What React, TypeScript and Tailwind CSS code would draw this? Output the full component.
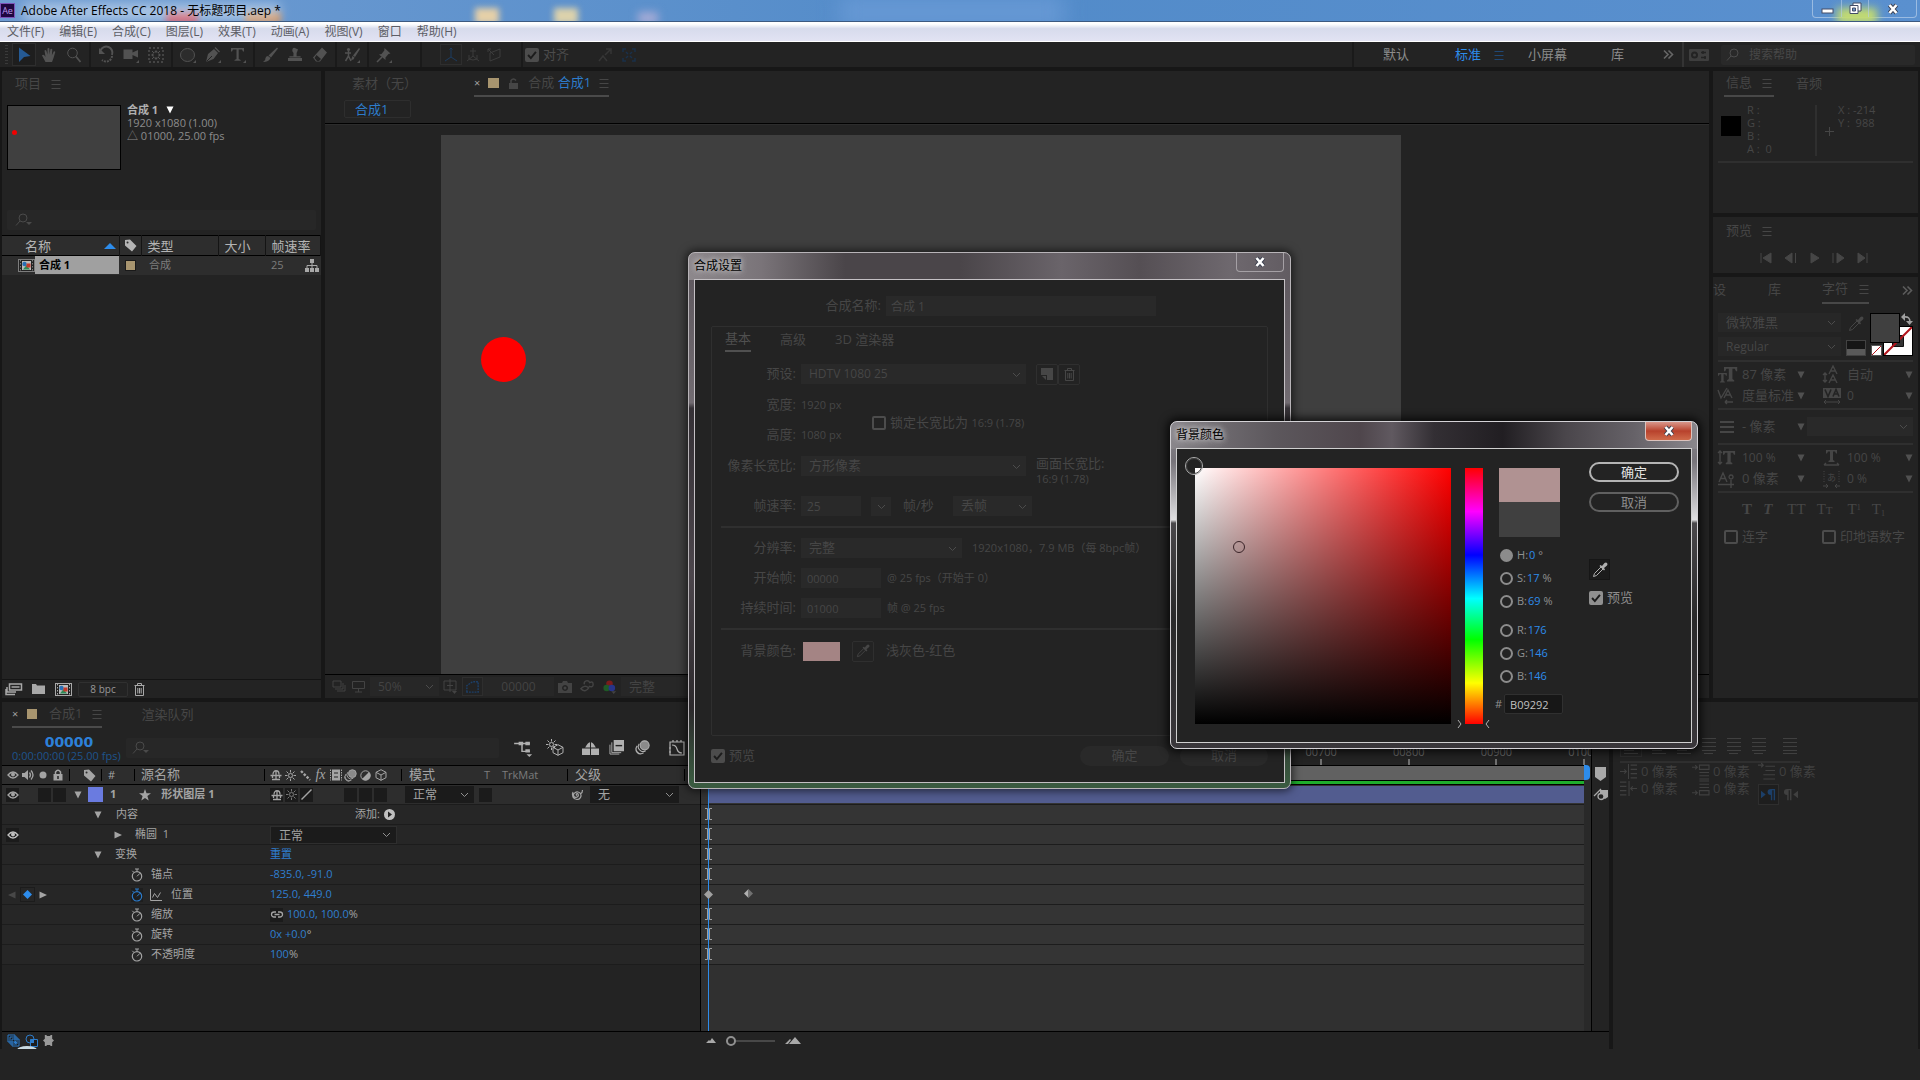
import React from "react";

type Kids = { children?: React.ReactNode };

function Ico({ w = 16, h, vb, className = "", children }: Kids & { w?: number; h?: number; vb?: string; className?: string }) {
  return (
    <svg width={w} height={h ?? w} viewBox={vb ?? "0 0 16 16"} fill="none" stroke="currentColor" strokeWidth="1" className={"shrink-0 overflow-visible " + className} aria-hidden="true">
      {children}
    </svg>
  );
}

const F = { fill: "currentColor", stroke: "none" } as const;

const Chevron = ({ className = "" }: { className?: string }) => (
  <Ico w={9} vb="0 0 9 9" className={className}><path d="M1 3l3.500 3.500L8 3" /></Ico>
);
const Burger = ({ className = "" }: { className?: string }) => (
  <Ico w={10} vb="0 0 10 10" className={className}><path d="M0.500 1.500h9M0.500 5.500h9M0.500 9.500h9" /></Ico>
);
const TriDown = ({ className = "" }: { className?: string }) => (
  <Ico w={8} vb="0 0 8 8" className={className}><path {...F} d="M0.500 0.500h7L4 7.500z" /></Ico>
);
const TriRight = ({ className = "" }: { className?: string }) => (
  <Ico w={8} vb="0 0 8 8" className={className}><path {...F} d="M0.500 0.500v7L8 4z" /></Ico>
);
const Magnify = ({ className = "", arrow = false }: { className?: string; arrow?: boolean }) => (
  <Ico w={18} h={14} vb="0 0 18 14" className={className}>
    <circle cx="8" cy="5" r="4" /><path d="M5 8L1 12.500" />{arrow && <path {...F} d="M11 9h6l-3 3z" />}
  </Ico>
);
const Eye = ({ className = "" }: { className?: string }) => (
  <Ico w={12} h={10} vb="0 0 12 10" className={className}>
    <path d="M1 5Q6-1 11 5Q6 11 1 5z" strokeWidth="1.300" /><circle cx="6" cy="4.600" r="2" {...F} />
  </Ico>
);
const Shy = () => (
  <Ico w={12} vb="0 0 12 12"><path d="M3 5.500C3 0.500 9 0.500 9 5.500M0.500 6.500h11M6 2v9M2 10.500h8M2.500 7v2M9.500 7v2" strokeWidth="1.300" /></Ico>
);
const Sun = ({ className = "" }: { className?: string }) => (
  <Ico w={11} vb="0 0 11 11" className={className}>
    <circle cx="5.500" cy="5.500" r="2" /><path d="M5.500 0v2.500M5.500 8.500V11M0 5.500h2.500M8.500 5.500H11M1.500 1.500l2 2M7.500 7.500l2 2M9.500 1.500l-2 2M3.500 7.500l-2 2" />
  </Ico>
);
const MotionBlur = ({ w = 13 }: { w?: number }) => (
  <Ico w={w} vb="0 0 14 14"><circle cx="9" cy="5" r="4.200" fill="#8a8a8a" /><path d="M4 3.500a4.500 4.500 0 0 0 6 6.500M2 5.500a4.500 4.500 0 0 0 6 6.500M0.800 8a4.500 4.500 0 0 0 5 5" /></Ico>
);
const Cube = ({ w = 12 }: { w?: number }) => (
  <Ico w={w} vb="0 0 12 12"><path d="M6 0.700L11 3.300V8.700L6 11.300L1 8.700V3.300zM1 3.300l5 2.700 5-2.700M6 6v5.300" /></Ico>
);
const Tag = () => (
  <Ico w={13} vb="0 0 13 13"><path {...F} fillRule="evenodd" d="M1 1l5-0.500L12.500 7 8 12.500 1 6.500zM3.500 2.500a1 1 0 1 0 .1 2 1 1 0 0 0-.1-2z" /></Ico>
);
const CompIcon = () => (
  <Ico w={17} h={13} vb="0 0 17 13">
    <rect x="0.500" y="0.500" width="16" height="12" fill="#222" /><path d="M2.500 1v11M14.500 1v11" strokeDasharray="1.500 1.500" />
    <rect x="4" y="2" width="9" height="9" fill="#bbb" stroke="none" />
    <path d="M5 10.500l3.500-4.500 3.500 4.500z" fill="#2e8b57" stroke="none" />
    <circle cx="6.500" cy="5" r="2.200" fill="#2a6fb5" stroke="none" /><rect x="8.500" y="4.500" width="4" height="4" fill="#c3392b" stroke="none" />
  </Ico>
);
const Trash = ({ className = "" }: { className?: string }) => (
  <Ico w={11} h={13} vb="0 0 11 13" className={className}><path d="M0.500 2.500h10M3.500 2V0.500h4V2M1.500 3v9.500h8V3M3.800 5v5.500M5.500 5v5.500M7.200 5v5.500" /></Ico>
);
const Dropper = ({ className = "", w = 16 }: { className?: string; w?: number }) => (
  <Ico w={w} className={className}><path d="M9 5L2.500 11.500 1.500 14.500 4.500 13.500 11 7z" /><path {...F} d="M7.500 4l1-1 1.500 1 2.500-3q1.500-1 2.500 0t0 2.500L12 6l1 1.500-1 1z" /></Ico>
);
const Watch = () => (
  <Ico w={12} h={14} vb="0 0 12 14"><circle cx="6" cy="8.300" r="4.700" strokeWidth="1.200" /><path d="M4 1h4M6 1v2.500M1.300 2.800l1.500 1.500M6 8.300l3-3" /></Ico>
);

function Drop({ label, value, id, className = "", chev = "text-[#4c4c4c]" }: { label: string; value: string; id?: string; className?: string; chev?: string }) {
  return (
    <span className={"relative flex items-center shrink-0 " + className}>
      <select id={id} aria-label={label} defaultValue={value} className="w-full h-full appearance-none bg-transparent pl-2 pr-4 outline-none">
        <option>{value}</option>
      </select>
      <Chevron className={"absolute right-[5px] pointer-events-none " + chev} />
    </span>
  );
}

const Tick = ({ id, label, checked, tone, text }: { id: string; label: React.ReactNode; checked?: boolean; tone: "lit" | "dim"; text: string }) => (
  <span className="flex items-center gap-1">
    <span className="relative flex">
      <input
        id={id}
        type="checkbox"
        defaultChecked={checked}
        className={
          "appearance-none size-[14px] rounded-xs border-2 " +
          (tone === "lit" ? "border-[#909090] checked:bg-[#909090]" : "border-[#4c4c4c] checked:bg-[#4c4c4c]")
        }
      />
      {checked && <Ico w={14} className="absolute inset-0 text-[#1c1c1c] pointer-events-none"><path d="M3.500 8l3.200 3.500L12.500 4.500" strokeWidth="2.200" /></Ico>}
    </span>
    <label htmlFor={id} className={text}>{label}</label>
  </span>
);

/* ---------- top ---------- */

function TitleBar() {
  return (
    <header className="relative h-[22px] shrink-0 flex items-center justify-between border-b border-[#3d5a80] overflow-hidden bg-linear-to-r from-[#6f9cd2] via-[#528bc9] to-[#5a90cf]">
      <i className="absolute left-[166px] top-3 w-8 h-3 bg-[#c04a60] blur-[3px]" />
      <i className="absolute left-[245px] top-3 w-9 h-3 bg-[#c08a60] blur-[3px]" />
      <i className="absolute left-[475px] top-2 w-6 h-4 bg-[#e6d0a8] blur-[3px]" />
      <i className="absolute left-[554px] top-2 w-6 h-4 bg-[#ddd2ac] blur-[3px]" />
      <i className="absolute left-[638px] top-3 w-5 h-3 bg-[#a5abd6] blur-[4px]" />
      <i className="absolute left-[840px] -top-1 w-56 h-8 bg-[#6698d4] blur-[10px]" />
      <i className="absolute left-6 top-1 w-64 h-4 bg-white/45 blur-[6px]" />
      <div className="relative flex items-center gap-[6px] h-full">
        <span className="w-[15px] h-[15px] bg-[#1f0740] border border-[#7d53b8] text-[#b99ae8] text-[9px] leading-[13px] text-center">Ae</span>
        <h1 className="text-black text-[12px]">Adobe After Effects CC 2018 - 无标题项目.aep *</h1>
      </div>
      <div className="relative flex self-start h-[18px] mr-[3px] border border-t-0 border-[#b5cdea]/70 rounded-b text-white">
        <i className="absolute left-6 top-2 w-10 h-4 bg-[#c4dc70] blur-[4px]" />
        <button aria-label="最小化" className="relative w-[29px] flex items-center justify-center border-r border-[#b5cdea]/60">
          <Ico w={13} h={6} vb="0 0 13 6" className="mt-1"><rect x="1" y="1" width="11" height="4" fill="#fff" stroke="#444c66" /></Ico>
        </button>
        <button aria-label="还原" className="relative w-[27px] flex items-center justify-center border-r border-[#b5cdea]/60">
          <Ico w={13} vb="0 0 13 13"><path d="M4 1h8v8H4z" fill="#fff" stroke="#444c66" /><path d="M1 3.500h8v8H1z" fill="#fff" stroke="#444c66" /><path d="M3.500 6h3v3h-3z" fill="#6c96c8" stroke="#444c66" /></Ico>
        </button>
        <button aria-label="关闭" className="relative w-[47px] flex items-center justify-center"><CloseX /></button>
      </div>
    </header>
  );
}

const CloseX = () => (
  <Ico w={12} vb="0 0 12 12">
    <path d="M2.500 2l7 8M9.500 2l-7 8" stroke="#3c4050" strokeWidth="4.200" /><path d="M2.500 2l7 8M9.500 2l-7 8" stroke="#fff" strokeWidth="2.600" />
  </Ico>
);

const menus = ["文件(F)", "编辑(E)", "合成(C)", "图层(L)", "效果(T)", "动画(A)", "视图(V)", "窗口", "帮助(H)"];

function MenuBar() {
  return (
    <nav className="h-[20px] shrink-0 flex items-center gap-[15px] pl-[7px] border-b border-white bg-linear-to-b from-white from-10% via-[#d7dbec] via-35% to-[#e2e3f3] text-[#5d5e66] text-[12px]">
      {menus.map((m) => <button key={m}>{m}</button>)}
    </nav>
  );
}

const Sep = () => <i className="w-[7px] shrink-0 h-full flex justify-center"><b className="w-[2px] h-full bg-[#1a1a1a]" /></i>;
const Corner = () => <path {...F} d="M16 13v3h-3z" />;

const tools: ({ n: string; el: React.ReactNode } | null)[] = [
  { n: "手形工具", el: <path {...F} d="M4.500 15L1 8.500q1-1.500 2.500 0L4.500 10 3.500 3.500q1-1.200 1.800 0L6.500 7.500V1.500q1-1.200 1.900 0v6l1-5.200q1.200-1 1.900.3l-.4 5.600 1.800-3.700q1.300-.6 1.600.6L12.500 11l-1.500 4z" /> },
  { n: "缩放工具", el: <><circle cx="6.500" cy="6" r="4.800" /><path d="M10 9.500l4.500 5.500" strokeWidth="1.800" /></> },
  null,
  { n: "旋转工具", el: <><path d="M2.500 3.500A6 6 0 0 1 14 8" strokeWidth="2" /><path d="M14 9A6 6 0 0 1 4 13" strokeWidth="2" strokeDasharray="2 1" /><path {...F} d="M1 1v6h6z" /></> },
  { n: "摄像机工具", el: <><path {...F} d="M0.500 2.500h9v3L15 3v7.500L9.500 8v4h-9z" /><Corner /></> },
  { n: "向后平移", el: <><path d="M1 1h14v14H1z" strokeDasharray="2 2" strokeWidth="1.400" /><path {...F} d="M8 3l2 2.500H6zM8 13l2-2.500H6zM3 8l2.500-2v4zM13 8l-2.500-2v4z" /><path d="M4 4l2 2M12 4l-2 2M4 12l2-2M12 12l-2-2" /></> },
  null,
  { n: "椭圆工具", el: <><ellipse cx="7.500" cy="8" rx="7" ry="6.500" fill="#2c2c2c" /><Corner /></> },
  { n: "钢笔工具", el: <><path {...F} d="M1 15L3 7l6-5 4 4-4.500 6zM9.500 1l1-1L15 4.500l-1 1z" /><path d="M1.500 14.500L7 9" stroke="#232323" /><Corner /></> },
  { n: "文字工具", el: <><path {...F} d="M1 1h13v3.500h-1L12 2.500H8.700V12l2 1v.8H4.500V13l2-1V2.500H3L2 4.500H1z" /><Corner /></> },
  null,
  { n: "画笔工具", el: <path {...F} d="M15 0.500l1 1L9 10.500 6.500 8.500zM6 9l2.500 2Q7 15 1 15q3-2 2.500-4Q4 9 6 9z" /> },
  { n: "仿制图章", el: <path {...F} d="M1 11h14v3H1zM6.500 6Q4.500 4 5.500 2t2.500-1 2.500 1 -.9 4v3.200h4V10.500H2.400V9.200h4z" /> },
  { n: "橡皮擦", el: <path {...F} d="M10 0.500l5 5-7 9H4l-3-4zM2.500 11l2.500 3h2l2-2-4.500-4z" fillRule="evenodd" /> },
  null,
  { n: "Roto 笔刷", el: <><circle cx="4.500" cy="2.500" r="1.600" {...F} /><path d="M4.500 4v5l-3 5M4.500 9l2.500 5M1 6h6" strokeWidth="1.500" /><path {...F} d="M15 1l1 1-5 8-2-1.500zM8.500 9l2 1.500Q10 13 7 13z" /><Corner /></> },
  null,
  { n: "操控点", el: <><path {...F} d="M8.500 1l6 5.500-2 .5-3 3.500v2.500L3 7.500l2.500-.5L8.300 3.500z" /><path d="M6 10l-5 5" strokeWidth="1.600" /><Corner /></> },
];

function Toolbar() {
  return (
    <div role="toolbar" className="h-[25px] shrink-0 flex items-center bg-[#232323] text-[#525252] text-[13px]">
      <i className="w-[3px] h-[19px] ml-[5px] mr-1 bg-[repeating-linear-gradient(#3a3a3a_0_1px,transparent_1px_3px)]" />
      <button aria-label="选取工具" className="w-[24px] h-[23px] flex items-center justify-center border border-[#2e2e2e] bg-[#1e1e1e] text-[#255a94]">
        <Ico w={16}><path {...F} d="M3 0.500L14.500 9 8 10l-5 5z" /></Ico>
      </button>
      {tools.map((t, i) =>
        t ? <button key={i} aria-label={t.n} className="w-[25px] flex justify-center shrink-0"><Ico w={16}>{t.el}</Ico></button> : <Sep key={i} />
      )}
      <i className="w-[21px]" /><Sep />
      <div className="flex items-center ml-4 mr-3">
        <button aria-label="本地轴" className="w-[22px] h-[21px] flex items-center justify-center border border-[#2e2e2e] text-[#1d3c60]"><Ico><path d="M8 1v9M8 10l-6 4M8 10l6 4M6.500 2.500L8 1l1.500 1.500" /></Ico></button>
        <button aria-label="世界轴" className="w-[22px] flex justify-center text-[#3c3c3c]"><Ico><path d="M8 1v8M8 9l-6 5M8 9l6 5M5 4h6M4 8v4l4 1 4-1V8" /></Ico></button>
        <button aria-label="视图轴" className="w-[22px] flex justify-center text-[#3c3c3c]"><Ico><path d="M3 6l10-4v8L3 14zM1 2l6 6M1 2h3M1 2v3" /></Ico></button>
      </div>
      <Sep />
      <Tick id="snap" checked tone="dim" label="对齐" text="text-[#4c4c4c]" />
      <span className="flex gap-2 ml-7">
        <Ico className="text-[#363636]"><path d="M2 14l4-5 4 5M8 8l5-5M9 2h5v5" strokeWidth="1.500" /></Ico>
        <Ico className="text-[#1a304a]"><path d="M2 5V2h3M11 2h3v3M14 11v3h-3M5 14H2v-3M5 5l2 2M11 5L9 7M5 11l2-2M11 11L9 9" strokeWidth="1.500" /></Ico>
      </span>
      <div className="ml-auto flex items-center h-full">
        <Sep />
        <nav className="flex items-center ml-[27px] pr-2 w-[299px] text-[#8c8c8c]">
          <button className="w-[72px] text-left">默认</button>
          <button className="text-[#2d8ceb]">标准</button>
          <Burger className="ml-[13px] text-[#1f4775]" />
          <button className="ml-6">小屏幕</button>
          <button className="ml-11">库</button>
          <button aria-label="更多工作区" className="ml-auto text-[#666]"><Ico w={11} vb="0 0 11 9"><path d="M1 0.500l4 4-4 4M5.500 0.500l4 4-4 4" strokeWidth="1.600" /></Ico></button>
        </nav>
        <i className="w-[2px] h-full bg-[#343434]" />
        <Ico w={20} h={12} vb="0 0 20 12" className="ml-[5px] mr-3 text-[#3e3e3e]"><rect width="20" height="12" rx="1" {...F} /><circle cx="5.500" cy="6" r="2.500" stroke="#232323" strokeWidth="2" /><path d="M12 3.500h5M12 8.500h5M14 2v3M16 7v3" stroke="#232323" strokeWidth="1.500" /></Ico>
        <div className="flex items-center w-[194px] h-[20px] mr-[5px] px-[5px] bg-[#292929] rounded-xs">
          <Magnify className="text-[#4c4c4c]" />
          <input aria-label="搜索帮助" placeholder="搜索帮助" className="w-full pl-[5px] bg-transparent text-[12px] outline-none placeholder:text-[#474747]" />
        </div>
      </div>
    </div>
  );
}

/* ---------- project ---------- */

function Project() {
  return (
    <section className="w-[319px] shrink-0 flex flex-col bg-[#232323]">
      <h2 className="flex items-center gap-[10px] h-[25px] pl-[13px] text-[13px] text-[#464646]">项目 <Burger /></h2>
      <div className="flex mt-[9px] ml-[5px] gap-[6px]">
        <div className="relative w-[114px] h-[65px] bg-[#404040] border border-black"><i className="absolute left-1 top-6 size-[5px] rounded-full bg-[#f00000]" /></div>
        <div className="text-[11px] leading-[13px] text-[#8c8c8c] -mt-[2px]">
          <button className="flex items-center gap-2 text-[#b0b0b0] font-bold">合成 1 <TriDown className="text-white" /></button>
          <p>1920 x1080 (1.00)</p>
          <p>△ 01000, 25.00 fps</p>
        </div>
      </div>
      <div className="flex items-center h-[20px] mx-[5px] mt-[40px] mb-[5px] px-2 bg-[#272727] text-[#4a4a4a] rounded-xs">
        <Magnify arrow /><input aria-label="搜索项目" className="w-full bg-transparent outline-none" />
      </div>
      <table className="w-full table-fixed text-[13px] text-[#b4b4b4] border-collapse">
        <colgroup><col className="w-[117px]" /><col className="w-[22px]" /><col className="w-[77px]" /><col className="w-[47px]" /><col /></colgroup>
        <thead className="bg-[#2d2d2d] border-y border-black">
          <tr className="h-[20px] text-left [&>th]:font-normal [&>th]:border-r [&>th]:border-[#141414] [&>th]:leading-[18px] [&>th]:p-0">
            <th><span className="flex items-center justify-between pl-[23px] pr-[3px]">名称 <Ico w={12} h={6} vb="0 0 12 6" className="text-[#2d8ceb]"><path {...F} d="M0 6l6-6 6 6z" /></Ico></span></th>
            <th><span className="flex justify-center"><Tag /></span></th>
            <th><span className="pl-[6px]">类型</span></th>
            <th><span className="pl-[6px]">大小</span></th>
            <th><span className="pl-[6px]">帧速率</span></th>
          </tr>
        </thead>
        <tbody>
          <tr className="h-[19px] bg-[#2d2d2d] text-[11px] text-[#7c7c7c] [&>td]:p-0">
            <td><span className="flex items-center h-[18px] pl-4"><CompIcon /><span className="grow h-full pl-1 bg-[#a0a0a0] text-black font-bold leading-[18px]">合成 1</span></span></td>
            <td><i className="block size-[11px] mx-auto bg-[#a8956f] border border-[#1a1a1a]" /></td>
            <td><span className="pl-[8px]">合成</span></td>
            <td />
            <td><span className="flex items-center justify-between pl-[6px] pr-[2px]">25 <span className="text-[#a8a8a8]"><Ico w={14} h={13} vb="0 0 14 13"><path {...F} d="M5 0h4v4H5zM0 9h4v4H0zM5 9h4v4H5zM10 9h4v4h-4z" /><path d="M7 4v5M2 9V6.500h10V9" /></Ico></span></span></td>
          </tr>
        </tbody>
      </table>
      <div className="mt-auto flex items-center h-[19px] gap-[6px] pl-[3px] border-t border-[#141414] text-[#a8a8a8]">
        <button aria-label="解释素材"><Ico w={17} h={12} vb="0 0 17 12"><path d="M4.500 1h12v6h-12zM6.500 4h8M2 4v5h9M1 6v5.500h9" strokeWidth="1.500" /></Ico></button>
        <button aria-label="新建文件夹" className="mx-1"><Ico w={13} h={10} vb="0 0 13 10"><path {...F} d="M0 0h4l1 1.500h8V10H0z" /></Ico></button>
        <button aria-label="新建合成"><CompIcon /></button>
        <button className="w-[50px] h-[15px] border border-[#303030] rounded-xs text-[10px] leading-[13px] text-[#989898]">8 bpc</button>
        <button aria-label="删除"><Trash /></button>
      </div>
    </section>
  );
}

/* ---------- composition viewer ---------- */

function Viewer() {
  return (
    <section className="grow min-w-0 flex flex-col bg-[#232323] text-[13px] text-[#464646]">
      <div className="flex h-[28px] pl-[27px]">
        <h2 className="w-[122px] leading-[25px]">素材（无）</h2>
        <h2 className="flex items-center gap-2 h-[26px] border-b-2 border-[#4a4a4a] text-[13px]">
          <button aria-label="关闭合成" className="text-[#a0a0a0] text-[11px]">×</button>
          <i className="w-[11px] h-[10px] bg-[#a8956f]" />
          <Ico w={9} h={11} vb="0 0 9 11" className="mx-[2px]"><path {...F} d="M0 5h9v6H0z" /><path d="M2 5V2.500Q4.500-.5 7 2.500" strokeWidth="1.500" /></Ico>
          <span>合成 <span className="text-[#2d7ccb]">合成1</span></span>
          <Burger />
        </h2>
      </div>
      <div className="h-[25px] pl-[19px] border-b border-black pt-[1px]">
        <button className="w-[67px] h-[18px] pl-[10px] text-left leading-[16px] border border-[#2e2e2e] rounded-xs text-[#2d7ccb]">合成1</button>
      </div>
      <div className="grow pl-[116px] pt-[10px] border-t border-[#2c2c2c] flex">
        <div className="relative w-[960px] bg-[#3f3f3f]">
          <i className="absolute left-[40px] top-[202px] size-[45px] rounded-full bg-[#ff0000]" />
        </div>
      </div>
      <div className="flex items-center h-[24px] pl-[7px] border-t border-black text-[#434343]">
        <Ico w={13} vb="0 0 13 13"><path d="M1 1h8v6H1zM3 9h8V3M5 11h8V5" /></Ico>
        <Ico w={13} vb="0 0 13 13" className="ml-[7px] mr-[5px]"><path d="M0.500 1.500h12v7H0.500zM6.500 9v3M3 12h7" /></Ico>
        <Drop label="放大率" value="50%" className="w-[69px] h-[19px] bg-[#272727] text-[12px]" />
        <Ico w={15} vb="0 0 15 15" className="mx-1"><path d="M1 2h12v9H1zM7 0v13M4 6.500h6" /><path {...F} d="M9 12h5l-2.500 3z" /></Ico>
        <button aria-label="蒙版" className="w-[21px] h-[19px] flex items-center justify-center border border-[#2e2e2e] text-[#1c3f68]"><Ico w={15}><path d="M2 14V7L8 3h6v11z" strokeDasharray="2 1" strokeWidth="1.500" /></Ico></button>
        <button className="w-[71px] h-[19px] bg-[#272727] text-[12px]">00000</button>
        <Ico w={14} h={12} vb="0 0 14 12" className="mx-[4px]"><path {...F} fillRule="evenodd" d="M0 2h4l1-2h4l1 2h4v10H0zM7 4a3 3 0 1 0 .1 0z" /><circle cx="7" cy="7" r="1.500" {...F} /></Ico>
        <Ico w={14} className="mx-1"><path d="M1 10q4-5 9-1-4 6-9 1zM5 5a3 3 0 0 1 6-2q4-2 4 2t-5 2" strokeWidth="1.600" /></Ico>
        <Ico w={15} className="mx-1"><circle cx="8" cy="5" r="3.500" fill="#7a1c1c" stroke="none" /><circle cx="5" cy="9.500" r="3.500" fill="#1f5a26" stroke="none" /><circle cx="10.500" cy="9.500" r="3.500" fill="#27348a" stroke="none" /><path {...F} d="M10 13h5l-2.500 3z" /></Ico>
        <Drop label="分辨率" value="完整" className="w-[86px] h-[19px] bg-[#272727]" />
      </div>
    </section>
  );
}

/* ---------- right column ---------- */

const Hr = () => <hr className="border-0 h-[2px] bg-[#2f2f2f]" />;

function Metric({ icon, value, small }: { icon: React.ReactNode; value: string; small?: boolean }) {
  return (
    <span className="flex items-center w-full h-[21px]">
      <span className="w-[18px] mr-[6px] shrink-0">{icon}</span>
      <button className={"grow text-left whitespace-nowrap " + (small ? "text-[12px]" : "text-[13px]")}>{value}</button>
      <TriDown className="text-[#505050]" />
    </span>
  );
}

const G = ({ d, children }: { d?: string; children?: React.ReactNode }) => <Ico w={18} vb="0 0 18 18">{d && <path d={d} strokeWidth="1.400" />}{children}</Ico>;

/* Serif capital used by the type-size icons */
const SerifT = ({ x, y, s }: { x: number; y: number; s: number }) => (
  <path {...F} transform={"translate(" + x + " " + y + ") scale(" + s + ")"} d="M0 0h11v3.500h-1L9 1.500H7V10l1.500 1v1h-6v-1L4 10V1.500H2L1 3.500H0z" />
);

function RightColumn() {
  return (
    <aside className="w-[205px] shrink-0 flex flex-col gap-1 text-[13px] text-[#464646]">
      <section className="h-[142px] bg-[#232323]">
        <div className="flex pl-[11px] gap-[22px]">
          <h2 className="flex items-center gap-[10px] h-[26px] px-[2px] border-b-2 border-[#484848]">信息 <Burger /></h2>
          <h2 className="leading-[25px]">音频</h2>
        </div>
        <div className="flex mt-[6px] pl-2 text-[11px] leading-[13px] h-[58px]">
          <i className="w-5 h-5 bg-black mt-[13px]" />
          <dl className="w-[68px] ml-[6px] leading-[13px]"><div>R :</div><div>G :</div><div>B :</div><div>A :&nbsp; 0</div></dl>
          <i className="w-[2px] h-[51px] bg-[#2f2f2f] mt-[2px]" />
          <Ico w={9} vb="0 0 9 9" className="ml-2 mt-6"><path d="M4.500 0v9M0 4.500h9" /></Ico>
          <div className="ml-1"><p>X : -214</p><p>Y :&nbsp; 988</p></div>
        </div>
        <div className="px-[5px]"><Hr /></div>
      </section>
      <section className="h-[56px] bg-[#232323]">
        <h2 className="flex items-center gap-[10px] h-[27px] pl-[13px]">预览 <Burger /></h2>
        <div className="flex gap-[11px] pl-[47px] pt-2">
          {[
            ["第一帧", "M1 1v10M11 1v10L3 6z"], ["上一帧", "M8 1v10L1 6zM11.500 1v10"], ["播放", "M3 1l8 5-8 5z"], ["下一帧", "M1 1v10M5 1l7 5-7 5z"], ["最后一帧", "M2 1l7 5-7 5zM11 1v10"],
          ].map(([n, d]) => <button key={n} aria-label={n}><Ico w={13} h={12} vb="0 0 13 12"><path d={d} fill="currentColor" /></Ico></button>)}
        </div>
      </section>
      <section className="grow bg-[#232323] pr-[5px]">
        <div className="flex items-center h-[26px] mb-[10px]">
          <h2>设</h2><h2 className="ml-[42px]">库</h2>
          <h2 className="flex items-center gap-[11px] h-[27px] ml-[41px] border-b-2 border-[#484848]">字符 <Burger /></h2>
          <Ico w={11} vb="0 0 11 9" className="ml-auto text-[#5c5c5c]"><path d="M1 0.500l4 4-4 4M5.500 0.500l4 4-4 4" strokeWidth="1.600" /></Ico>
        </div>
        <div className="flex pl-[5px] mb-1">
          <div className="w-[123px] flex flex-col gap-[5px]">
            <Drop label="字体" value="微软雅黑" className="h-[19px] bg-[#272727]" />
            <Drop label="字体样式" value="Regular" className="h-[19px] bg-[#272727] text-[12px]" />
          </div>
          <div className="w-[29px] flex flex-col items-center gap-2 pt-[3px]">
            <Dropper />
            <span className="w-5 h-4 border border-[#424242] bg-[#161616] flex items-end"><i className="w-full h-[6px] bg-[#5a5a5a]" /></span>
          </div>
          <div className="relative w-[43px] h-[43px]">
            <span className="absolute right-0 bottom-0 size-[30px] bg-white border border-black overflow-hidden">
              <Ico w={28} vb="0 0 28 28"><path d="M8.500 8.500h11v11h-11z" fill="#333" stroke="#111" /><path d="M0 28L28 0" stroke="#b3141c" strokeWidth="2" /></Ico>
            </span>
            <button aria-label="填充颜色" className="absolute left-0 top-0 size-[30px] bg-[#404040] border border-black" />
            <Ico w={12} vb="0 0 12 12" className="absolute right-0 top-0 text-[#a0a0a0]"><path d="M3 4q6-1 6 5" strokeWidth="1.600" /><path {...F} d="M0 4l4-4v8zM5 8h7l-3.500 4z" /></Ico>
            <span className="absolute left-[1px] bottom-0 size-[11px] bg-white border border-[#555]"><Ico w={9} vb="0 0 9 9"><path d="M0 9L9 0" stroke="#b3141c" /></Ico></span>
          </div>
        </div>
        <div className="pl-[5px] flex flex-col gap-[2px]">
          <Hr />
          <div className="grid grid-cols-[87px_90px] gap-x-[18px]">
            <Metric icon={<G><SerifT x={0} y={7} s={0.8} /><SerifT x={6} y={1} s={1.2} /></G>} value="87 像素" />
            <Metric icon={<G d="M2 7v9M0 9l2-2 2 2M0 14l2 2 2-2M6 8l4-8 4 8M7.500 5h5M6 17l4-8 4 8M7.500 14h5" />} value="自动" />
            <Metric icon={<G d="M0 3l3 8 6-10M6 11l4-8 4 8M8 8h5M7 15h8M7 15l2-2M7 15l2 2" />} value="度量标准" />
            <Metric small icon={<G><rect y="1" width="18" height="10" {...F} /><path d="M2 2.500l3 7 3-7M10 9.500l3-7 3 7M11 7h4" stroke="#232323" strokeWidth="1.600" /><path d="M1 15h16M1 15l2-2M1 15l2 2M17 15l-2-2M17 15l-2 2" /></G>} value="0" />
          </div>
          <Hr />
          <div className="flex items-center py-1">
            <span className="w-[87px] mr-[2px] shrink-0"><Metric icon={<G><path d="M2 4h14M2 9h14M2 14h14" strokeWidth="2" /></G>} value="- 像素" /></span>
            <Drop label="描边方式" value="" className="grow h-[19px] bg-[#292929]" />
          </div>
          <Hr />
          <div className="grid grid-cols-[87px_90px] gap-x-[18px]">
            <Metric small icon={<G d="M2 2v13M0 4l2-2 2 2M0 13l2 2 2-2"><SerifT x={5} y={2} s={1.1} /></G>} value="100 %" />
            <Metric small icon={<G d="M1 16h15M1 16l2-2M16 16l-2-2"><SerifT x={3} y={1} s={1} /></G>} value="100 %" />
            <Metric icon={<G d="M1 12l4-9 4 9M2.500 8.500h5M0 14.500h16M13 5a2 2 0 1 0 .1 0M13 10v8" />} value="0 像素" />
            <Metric small icon={<G><path d="M1 1v12M16 1v12" strokeDasharray="1 1.500" /><path d="M0 16h5M3 14l2 2-2 2M17 16h-5M14 14l-2 2 2 2" /><text x="4" y="11" fontSize="9" fontFamily="Noto Sans CJK JP" {...F}>あ</text></G>} value="0 %" />
          </div>
          <Hr />
          <div className="flex items-center justify-center gap-[11px] h-7 pr-1 font-['Liberation_Serif'] font-bold text-[15px]">
            <button>T</button><button className="italic">T</button><button className="font-normal ml-1">TT</button><button className="font-normal">T<span className="text-[11px]">T</span></button><button className="font-normal ml-1">T<sup className="text-[8px]">1</sup></button><button className="font-normal">T<sub className="text-[8px]">1</sub></button>
          </div>
          <div className="flex items-center h-[24px] pl-[6px] gap-[54px] whitespace-nowrap">
            <Tick id="lig" tone="dim" label="连字" text="" />
            <Tick id="hindi" tone="dim" label="印地语数字" text="" />
          </div>
        </div>
      </section>
    </aside>
  );
}

/* ---------- timeline ---------- */

const VBar = () => <i className="w-[1px] h-[12px] bg-black shrink-0" />;
const Slot = ({ children }: Kids) => <span className="w-[13px] h-[14px] mr-[2px] flex items-center justify-center bg-[#1b1b1b] shrink-0">{children}</span>;

function Row({ a, b, c, tall }: { a?: React.ReactNode; b: React.ReactNode; c?: React.ReactNode; tall?: boolean }) {
  return (
    <div className={"flex items-center h-[20px] border-b border-[#1c1c1c] " + (tall ? "bg-[#2d2d2d]" : "bg-[#262626]")}>
      <span className="w-[67px] shrink-0 flex items-center">{a}</span>
      <span className="w-[201px] shrink-0 flex items-center">{b}</span>
      <span className="grow flex items-center">{c}</span>
    </div>
  );
}

const Hot = ({ children }: Kids) => <button className="text-[#2f7fd0] text-[11px]">{children}</button>;

const Prop = ({ name, value, unit, link }: { name: string; value: string; unit?: string; link?: boolean }) => (
  <Row
    b={<span className="flex items-center gap-[8px] pl-[62px]"><button aria-label={"关键帧 " + name}><Watch /></button>{name}</span>}
    c={<>{link && <span className="mr-[2px]"><Slot><Ico w={12} h={7} vb="0 0 12 7"><path d="M5 1H3a2.500 2.500 0 0 0 0 5h2M7 1h2a2.500 2.500 0 0 1 0 5H7M3.500 3.500h5" strokeWidth="1.300" /></Ico></Slot></span>}<Hot>{value}</Hot>{unit}</>}
  />
);

const switchIcons = [
  <Shy />, <Sun />,
  <Ico w={11} vb="0 0 11 11"><path d="M1 1l9 9" strokeWidth="2.400" strokeDasharray="2.500 1.500" /></Ico>,
  <i className="font-['Liberation_Serif'] text-[14px] leading-[14px]">fx</i>,
  <Ico w={12} vb="0 0 12 12"><path d="M0.500 0.500v11M11.500 0.500v11" strokeDasharray="1.500 1" /><rect x="2" y="0.500" width="8" height="11" {...F} /><path d="M4 4h4M4 8h4" stroke="#222" /></Ico>,
  <MotionBlur />,
  <Ico w={11} vb="0 0 11 11"><circle cx="5.500" cy="5.500" r="4.700" /><path {...F} d="M9 2a4.700 4.700 0 1 1-7 7z" /></Ico>,
  <Cube />,
];

function LayerPane() {
  return (
    <div className="w-[699px] shrink-0 flex flex-col border-r border-black text-[#a4a4a4]">
      <div className="flex items-center h-[35px] pl-[10px]">
        <div className="w-[114px] text-center">
          <button className="block mx-auto text-[#2d80d8] text-[14px] leading-[16px] font-bold font-['DejaVu_Sans']">00000</button>
          <span className="block text-left text-[11px] leading-[12px] text-[#1e538c] whitespace-nowrap">0:00:00:00 (25.00 fps)</span>
        </div>
        <div className="flex items-center w-[373px] h-[20px] px-[6px] bg-[#272727] text-[#4a4a4a] rounded-xs">
          <Magnify arrow /><input aria-label="搜索图层" className="w-full bg-transparent outline-none" />
        </div>
        <div className="flex items-center ml-[14px] text-[#b0b0b0]">
          <Ico w={18}><path d="M1 4h5M8 4h7M8 4v7h7" strokeWidth="1.300" /><path {...F} d="M5 2.500h4v3H5zM11 2.500h4v3h-4zM11 9h4v3h-4zM12 13.500h5l-2.500 2.500z" /></Ico>
          <span className="flex ml-[15px] mr-[18px]"><Sun /><span className="-ml-[5px] mt-[5px]"><Cube /></span></span>
          <Ico w={17}><path {...F} d="M0 9h16v6H0zM3 8q5-10 10 0z" /><path d="M8 2v13" stroke="#232323" /></Ico>
          <Ico w={15} className="ml-[10px]"><path {...F} d="M5 0h11v12H5z" /><path d="M3 2.500v11h10M1 5v10h10" /><path d="M7 6h7" stroke="#232323" strokeWidth="1.500" /></Ico>
          <span className="ml-[11px]"><MotionBlur w={15} /></span>
          <Ico w={16} className="ml-[19px]"><path d="M1 2h14v13H1zM3 5q4 0 5 4t5 4M4 0v2M8 0v2M12 0v2M0 8h2M0 12h2" strokeWidth="1.200" /></Ico>
        </div>
      </div>
      <div className="flex items-center h-[20px] bg-[#2d2d2d] border-y border-black text-[13px]">
        <span className="w-[67px] flex items-center gap-[3px] pl-[5px] shrink-0">
          <Eye />
          <Ico w={12} vb="0 0 12 12"><path {...F} d="M0 4h2.500L6 1v10L2.500 8H0z" /><path d="M7.500 3.500q2 2.500 0 5M9 1.500q4 4.500 0 9" strokeWidth="1.300" /></Ico>
          <Ico w={12} vb="0 0 12 12"><circle cx="6" cy="6" r="3.500" {...F} /></Ico>
          <Ico w={12} vb="0 0 12 12"><path {...F} d="M1.500 5h9v6.500h-9z" /><path d="M3.500 5V3q2.500-3.500 5 0v2" strokeWidth="1.500" /><path d="M6 7v3" stroke="#222" strokeWidth="1.500" /></Ico>
        </span>
        <VBar /><span className="w-[31px] flex justify-center pl-2"><Tag /></span>
        <VBar /><span className="w-[32px] pl-[6px] text-[11px]">#</span>
        <VBar /><span className="w-[129px] pl-[6px]">源名称</span>
        <VBar /><span className="w-[136px] flex items-center pl-[3px]">{switchIcons.map((s, i) => <span key={i} className="w-[15px] flex justify-center">{s}</span>)}</span>
        <VBar /><span className="w-[78px] pl-[7px]">模式</span><span className="w-[22px] pl-[4px] text-[11px] text-[#7c7c7c]">T</span><span className="w-[65px] text-[11px] text-[#7c7c7c]">TrkMat</span>
        <VBar /><span className="w-[116px] pl-[7px]">父级</span><VBar />
      </div>
      <div className="text-[11px]">
        <Row tall
          a={<><span className="ml-[4px] mr-[17px]"><Slot><Eye /></Slot></span><Slot /><Slot /></>}
          b={<><TriDown className="ml-[5px] mr-[6px]" /><i className="size-[15px] bg-[#6a7be0]" /><span className="ml-[7px] font-bold">1</span>
            <Ico w={12} vb="0 0 12 12" className="ml-[23px] mr-[10px]"><path {...F} d="M6 0l1.500 4.200 4.500.1-3.600 2.700L9.700 11.500 6 8.900l-3.700 2.600L3.600 7 0 4.300l4.500-.1z" /></Ico>
            <span className="font-bold">形状图层 1</span></>}
          c={<><Slot><Shy /></Slot><Slot><Sun className="text-[#777]" /></Slot><Slot><Ico w={11} vb="0 0 11 11"><path d="M0.500 10.500l10-10" strokeWidth="1.500" /></Ico></Slot>
            <span className="flex ml-[29px] mr-[16px]"><Slot /><Slot /><Slot /></span>
            <Drop label="混合模式" value="正常" className="w-[69px] h-[17px] bg-[#1b1b1b] text-[12px] mr-[5px]" chev="text-[#909090]" /><Slot />
            <Ico w={12} vb="0 0 12 12" className="ml-[77px] mr-[7px]"><path d="M6 6.500a1 1 0 1 1 1.200-1.200A2.400 2.400 0 1 1 4 3.700a4 4 0 0 1 5.600 1A4 4 0 0 1 6 10.500 5 5 0 0 1 2 3M9.600 4.700q2-1 1.900-3.700" strokeWidth="1.200" /></Ico>
            <Drop label="父级" value="无" className="w-[89px] h-[17px] bg-[#1b1b1b] text-[12px]" chev="text-[#909090]" /></>}
        />
        <Row b={<><TriDown className="ml-[25px] mr-[14px]" />内容</>} c={<span className="flex items-center gap-1 ml-[85px]">添加: <button aria-label="添加"><Ico w={11} vb="0 0 11 11" className="text-[#c0c0c0]"><circle cx="5.500" cy="5.500" r="5.500" {...F} /><path d="M4 2.500v6l4-3z" fill="#222" stroke="none" /></Ico></button></span>} />
        <Row a={<span className="ml-[4px]"><Slot><Eye className="text-[#c0c0c0]" /></Slot></span>} b={<><TriRight className="ml-[45px] mr-[13px]" />椭圆&nbsp; 1</>} c={<Drop label="椭圆混合模式" value="正常" className="w-[127px] h-[18px] bg-[#1b1b1b] border border-[#2e2e2e] text-[12px]" chev="text-[#909090]" />} />
        <Row b={<><TriDown className="ml-[25px] mr-[13px]" />变换</>} c={<Hot>重置</Hot>} />
        <Prop name="锚点" value="-835.0, -91.0" />
        <Row
          a={<span className="flex items-center ml-[6px] gap-1"><TriRight className="rotate-180 text-[#484848]" /><button aria-label="切换关键帧" className="size-[15px] flex items-center justify-center border border-[#1c1c1c]"><Ico w={9} vb="0 0 9 9" className="text-[#2d8ceb]"><path {...F} d="M4.500 0L9 4.500 4.500 9 0 4.500z" /></Ico></button><TriRight /></span>}
          b={<><button aria-label="关键帧 位置" className="ml-[62px] text-[#2d7ccb] bg-[#1e1e1e]"><Watch /></button><Ico w={12} vb="0 0 12 12" className="ml-[7px] mr-[9px]"><path d="M0.500 0v11.500H12M2.500 8.500l2-4 3 4 3-5" /></Ico>位置</>}
          c={<Hot>125.0, 449.0</Hot>}
        />
        <Prop name="缩放" value="100.0, 100.0" unit="%" link />
        <Prop name="旋转" value="0x +0.0" unit="°" />
        <Prop name="不透明度" value="100" unit="%" />
      </div>
    </div>
  );
}

const ticks = ["00000", "00100", "00200", "00300", "00400", "00500", "00600", "00700", "00800", "00900", "01000"];

function Tracks() {
  return (
    <div className="relative isolate grow min-w-0 flex">
      <div className="grow min-w-0 flex flex-col pl-[7px] bg-[#232323]">
        <div className="relative z-10 flex justify-between items-end h-[35px] text-[11px] text-[#707070]">
          {ticks.map((t) => <span key={t} className="w-0 flex flex-col items-center leading-[13px]">{t}<i className="w-[2px] h-[6px] bg-[#707070] mt-[1px]" /></span>)}
        </div>
        <div className="h-[15px] bg-[#616161] border-t border-black" />
        <div className="h-[5px] bg-[#1fae2c] border-y border-black" />
        <div className="h-[19px] -ml-[7px] pl-[7px] py-[1px] bg-[#343434]"><div className="h-full bg-[#525c8f]" /></div>
        <div className="-ml-[7px] h-[160px] bg-[repeating-linear-gradient(#1c1c1c_0_1px,#343434_1px_20px)]" />
        <div className="-ml-[7px] grow bg-[#303030] border-t border-[#1c1c1c]" />
      </div>
      <div className="w-[7px] bg-[#292929] pt-[35px]"><i className="block w-[6px] h-[15px] rounded-r bg-[#2d8ceb]" /></div>
      <div className="relative z-20 w-[18px] bg-[#232323] border-l border-black pt-[37px] flex flex-col items-center gap-[7px] text-[#a8a8a8]">
        <Ico w={11} h={14} vb="0 0 11 14"><path {...F} d="M0 0h11v10l-5.500 4L0 10z" /></Ico>
        <Ico w={14} h={12} vb="0 0 14 12"><path {...F} d="M6 2h8v7l-3 2-5-2z" /><circle cx="7" cy="8.500" r="3" fill="#232323" strokeWidth="1.300" /><path d="M0 8l7-7" strokeWidth="1.300" /></Ico>
      </div>
      <div className="absolute left-[2px] top-[54px] bottom-0 w-[11px] flex flex-col items-center text-[#a0a0a0]">
        <i className="absolute w-[1px] left-[5px] inset-y-0 bg-[#2d8ceb]" />
        {[0, 1, 2, 3, 4, 5, 6, 7].map((i) => (
          <span key={i} className={"relative h-[20px] flex items-center " + (i === 0 ? "mt-[20px]" : "")}>
            {i === 4
              ? <Ico w={9} vb="0 0 9 9"><path {...F} d="M4.500 0L9 4.500 4.500 9 0 4.500z" /></Ico>
              : <Ico w={7} h={12} vb="0 0 7 12"><path d="M0 0.500h2.500v11H0M7 0.500H4.500v11H7" /></Ico>}
          </span>
        ))}
      </div>
      <Ico w={9} vb="0 0 9 9" className="absolute left-[43px] top-[159px]"><path d="M4.500 0L0 4.500 4.500 9z" fill="#b0b0b0" stroke="none" /><path d="M4.500 0L9 4.500 4.500 9z" fill="#707070" stroke="none" /></Ico>
    </div>
  );
}

function Timeline() {
  return (
    <section className="grow min-w-0 flex flex-col bg-[#232323]">
      <div className="flex gap-[39px] h-[28px] pl-[10px] text-[13px] text-[#464646]">
        <h2 className="flex items-center h-[26px] border-b-2 border-[#4a4a4a]">
          <button aria-label="关闭合成1" className="text-[#a0a0a0] text-[11px] w-[15px] text-left">×</button>
          <i className="w-[10px] h-[10px] mr-3 bg-[#a8956f]" />合成1 <Burger className="ml-[10px]" />
        </h2>
        <h2 className="leading-[25px]">渲染队列</h2>
      </div>
      <div className="flex h-[301px]"><LayerPane /><Tracks /></div>
      <div className="relative flex items-center h-[18px] pl-[5px] border-t border-black overflow-hidden">
        <i className="absolute left-[15px] top-[14px] w-[20px] h-[8px] rounded-[50%] bg-[#c8d8e0]" />
        <span className="w-[699px] shrink-0 flex items-center gap-[5px] text-[#2d7ccb]">
          <Ico w={13} vb="0 0 13 13"><path d="M1 1h7v7H1zM3 3h7v7H3zM5 5h7v7H5zM8.500 7v3M7 8.500h3" fill="#1c1c1c" /></Ico>
          <Ico w={13} vb="0 0 13 13"><circle cx="5" cy="5" r="4" /><path d="M5.500 5.500h7v7h-7z" fill="#1c1c1c" /><path {...F} d="M5.500 5.500h3.500v3.500H5.500z" /></Ico>
          <Ico w={11} vb="0 0 12 12" className="text-[#999]"><path {...F} d="M2 0h2v1h4V0h2v4l2 2-2 2v4H8v-1H4v1H2V8L0 6l2-2z" /></Ico>
        </span>
        <label className="flex items-center gap-[10px] text-[#a8a8a8]">
          <Ico w={10} h={5} vb="0 0 10 5"><path {...F} d="M0 5l3-3 1 1 2-3 4 5z" /></Ico>
          <input type="range" aria-label="缩放时间轴" defaultValue="0" className="appearance-none w-[49px] h-[2px] bg-[#484848] [&::-webkit-slider-thumb]:appearance-none [&::-webkit-slider-thumb]:size-[10px] [&::-webkit-slider-thumb]:rounded-full [&::-webkit-slider-thumb]:border-2 [&::-webkit-slider-thumb]:border-[#909090] [&::-webkit-slider-thumb]:bg-[#232323]" />
          <Ico w={16} h={7} vb="0 0 16 7"><path {...F} d="M0 7l5-5 1 1-3 4zM4 7l6-7 6 7z" /></Ico>
        </label>
      </div>
    </section>
  );
}

const Indent = ({ d, v }: { d: string; v: string }) => (
  <span className="flex items-center gap-[4px] h-[17px] whitespace-nowrap"><Ico w={17}><path d={d} /></Ico><button>{v}</button></span>
);

function Paragraph() {
  return (
    <aside className="w-[305px] shrink-0 bg-[#232323] text-[#404040] text-[13px] pl-[7px] pt-[32px]">
      <div className="flex items-center gap-[9px] h-[23px] text-[#404040]">
        {["左对齐", "居中", "右对齐"].map((n) => (
          <button key={n} aria-label={n} className="first:border first:border-[#2e2e2e] first:w-[22px] flex justify-center h-[23px] items-center"><Ico w={16}><path d="M1 0.500h14M1 4.500h10M1 8.500h14M1 12.500h10M1 15.500h14" /></Ico></button>
        ))}
        {["末行左对齐", "末行居中", "末行右对齐"].map((n) => (
          <button key={n} aria-label={n}><Ico w={16}><path d="M1 0.500h14M1 4.500h14M1 8.500h14M1 12.500h14M3 15.500h9" /></Ico></button>
        ))}
        <button aria-label="两端对齐" className="ml-[6px]"><Ico w={16}><path d="M1 0.500h14M1 4.500h14M1 8.500h14M1 12.500h14M1 15.500h14" /></Ico></button>
      </div>
      <div className="w-[180px] mt-1"><Hr /></div>
      <div className="flex">
        <div className="flex flex-col w-[72px]"><Indent d="M0 8h6M4 6l2 2-2 2M8 1v14M10 2h6M10 6h6M10 10h6M10 14h6" v="0 像素" /><Indent d="M0 2h6M0 6h6M0 10h6M0 14h6M8.500 1v14M16 8h-6M12 6l-2 2 2 2" v="0 像素" /></div>
        <div className="flex flex-col w-[66px]"><Indent d="M0 4h5M3 2l2 2-2 2M7 2h9v4H7zM7 9h9M7 12h9M7 15h9" v="0 像素" /><Indent d="M0 12h5M3 10l2 2-2 2M7 10h9v4H7zM7 1h9M7 4h9M7 7h9" v="0 像素" /></div>
        <div className="flex flex-col gap-1">
          <Indent d="M0 2h5M3 0l2 2-2 2M7 3h9M7 7h9M5 11h11M5 15h11" v="0 像素" />
          <span className="flex gap-1 text-[#404040]">
            <button aria-label="从左到右" className="w-[21px] h-[21px] flex items-center justify-center border border-[#2e2e2e] bg-[#1e1e1e] text-[#1c3f68]"><Ico w={15}><path {...F} d="M0 4v8l5-4zM15 2v12h-1.500V3.500h-1.500V14h-1.500V8.500q-3.500 0-3.500-3.200T10.500 2z" /></Ico></button>
            <button aria-label="从右到左"><Ico w={15}><path {...F} d="M16 4v8l-5-4zM9 2v12H7.500V3.500H6V14H4.500V8.500Q1 8.500 1 5.300T4.500 2z" /></Ico></button>
          </span>
        </div>
      </div>
    </aside>
  );
}

/* ---------- dialogs ---------- */

const boxBg = "bg-[#292929]";

function FormRow({ label, htmlFor, children }: Kids & { label: string; htmlFor?: string }) {
  return (
    <div className="flex items-center h-[20px]">
      <label htmlFor={htmlFor} className="w-[84px] shrink-0 text-right mr-[5px] whitespace-nowrap">{label}:</label>
      {children}
    </div>
  );
}

function CompSettings() {
  return (
    <div role="dialog" aria-label="合成设置" className="absolute left-[688px] top-[252px] w-[603px] rounded-[7px] border border-[#b8b4b8] p-[5px] pt-0 shadow-[0_0_8px_2px_rgba(0,0,0,0.6)] bg-no-repeat bg-[length:100%_27px,100%_100%] bg-[linear-gradient(90deg,#8d888c,#7a7479_12%,#4a4549_26%,#4a4549_45%,#6a646a_62%,#554f54_75%,#6e686e_90%,#625c62),linear-gradient(#5c565c,#716b71_28%,#353136_29%,#4c464c_60%,#2c292c_85%,#3a5a40_99%)]">
      <div className="flex items-center justify-between h-[26px] -mr-1">
        <h2 className="text-[12px] text-black [text-shadow:0_0_6px_#ccc,0_0_6px_#ccc]">合成设置</h2>
        <button aria-label="关闭合成设置" className="self-start w-[48px] h-[19px] flex items-center justify-center border border-t-0 border-[#a5a0a5] rounded-b mr-[5px]"><CloseX /></button>
      </div>
      <div className="border border-[#c4c0c4] bg-[#232323] text-[13px] text-[#464646] px-4 h-[504px] pt-4">
        <div className="flex items-center h-[20px] gap-[5px] pl-[110px]">
          <label htmlFor="cname" className="w-[60px] text-right whitespace-nowrap">合成名称:</label>
          <input id="cname" defaultValue="合成 1" className={"w-[270px] h-[20px] px-[5px] outline-none text-[12px] " + boxBg} />
        </div>
        <div className="mt-[10px] h-[410px] rounded-xs border border-[#2f2f2f] pt-[1px]">
          <div role="tablist" className="flex gap-[29px] pl-[13px] mb-[12px]">
            <button role="tab" aria-selected="true" className="h-[24px] border-b-2 border-[#505050] text-[#505050]">基本</button>
            <button role="tab" className="h-[24px]">高级</button>
            <button role="tab" className="h-[24px]">3D 渲染器</button>
          </div>
          <FormRow label="预设" htmlFor="preset">
            <Drop id="preset" label="预设" value="HDTV 1080 25" className={"w-[225px] h-[20px] text-[12px] mr-[10px] " + boxBg} />
            <button aria-label="新建预设" className="w-[22px] h-[21px] flex items-center justify-center border border-[#2f2f2f] rounded-xs"><Ico w={12} vb="0 0 12 12"><path {...F} d="M0 0h12v12H6V7H0zM1 8h4v4z" /></Ico></button>
            <button aria-label="删除预设" className="w-[22px] h-[21px] flex items-center justify-center border border-[#2f2f2f] rounded-xs"><Trash /></button>
          </FormRow>
          <div className="relative flex flex-col gap-[10px] mt-[11px] mb-[11px]">
            <FormRow label="宽度"><button className="text-[11px]">1920 px</button></FormRow>
            <FormRow label="高度"><button className="text-[11px]">1080 px</button></FormRow>
            <span className="absolute left-[160px] top-[18px]"><Tick id="lock" tone="dim" label={<>锁定长宽比为 <span className="text-[11px]">16:9 (1.78)</span></>} text="" /></span>
          </div>
          <FormRow label="像素长宽比" htmlFor="par">
            <Drop id="par" label="像素长宽比" value="方形像素" className={"w-[225px] h-[20px] mr-[10px] " + boxBg} />
            <span className="text-[13px] leading-[15px] self-start whitespace-nowrap">画面长宽比:<br /><span className="text-[11px]">16:9 (1.78)</span></span>
          </FormRow>
          <div className="mt-5 mb-[10px]">
            <FormRow label="帧速率" htmlFor="fps">
              <input id="fps" defaultValue="25" className={"w-[60px] h-[20px] px-[6px] outline-none text-[12px] " + boxBg} />
              <Drop label="帧速率预设" value="" className={"w-[20px] h-[19px] ml-[10px] mr-3 " + boxBg} />
              <span className="w-[50px]">帧/秒</span>
              <Drop label="丢帧" value="丢帧" className={"w-[79px] h-[20px] " + boxBg} />
            </FormRow>
          </div>
          <div className="mx-[9px]"><Hr /></div>
          <div className="flex flex-col gap-[10px] my-[10px]">
            <FormRow label="分辨率" htmlFor="res"><Drop id="res" label="分辨率" value="完整" className={"w-[161px] h-[20px] mr-[10px] " + boxBg} /><span className="text-[11px]">1920x1080，7.9 MB（每 8bpc帧）</span></FormRow>
            <FormRow label="开始帧" htmlFor="start"><input id="start" defaultValue="00000" className={"w-[80px] h-[20px] px-[6px] mr-[6px] outline-none text-[11px] " + boxBg} /><span className="text-[11px]">@ 25 fps（开始于 0）</span></FormRow>
            <FormRow label="持续时间" htmlFor="dur"><input id="dur" defaultValue="01000" className={"w-[80px] h-[20px] px-[6px] mr-[6px] outline-none text-[11px] " + boxBg} /><span className="text-[11px]">帧 @ 25 fps</span></FormRow>
          </div>
          <div className="mx-[9px] mb-[11px]"><Hr /></div>
          <FormRow label="背景颜色">
            <button aria-label="背景颜色" className="w-[37px] h-[19px] ml-[2px] mr-3 bg-[#a48484]" />
            <button aria-label="吸管" className="w-[22px] h-[21px] flex items-center justify-center border border-[#2f2f2f] mr-3 rounded-xs"><Dropper w={14} /></button>
            浅灰色-红色
          </FormRow>
        </div>
        <div className="flex items-center mt-[10px] gap-[11px]">
          <Tick id="cprev" checked tone="dim" label="预览" text="" />
          <button className={"ml-auto w-[89px] h-[20px] rounded-full " + boxBg}>确定</button>
          <button className={"w-[88px] h-[20px] rounded-full " + boxBg}>取消</button>
        </div>
      </div>
    </div>
  );
}

const channels = [
  { k: "H", v: "0", u: "°", on: true, gap: "" },
  { k: "S", v: "17", u: "%", on: false, gap: "" },
  { k: "B", v: "69", u: "%", on: false, gap: "" },
  { k: "R", v: "176", u: "", on: false, gap: "mt-[6px]" },
  { k: "G", v: "146", u: "", on: false, gap: "" },
  { k: "B", v: "146", u: "", on: false, gap: "" },
];

function ColorDialog() {
  return (
    <div role="dialog" aria-label="背景颜色" className="absolute left-[1170px] top-[421px] w-[528px] rounded-[7px] border border-[#d4d2d6] p-[5px] pt-0 shadow-[0_0_8px_3px_rgba(0,0,0,0.75)] bg-no-repeat bg-[length:100%_27px,100%_100%] bg-[linear-gradient(90deg,#8a878c,#6d696e_10%,#5c575c_20%,#4f464c_36%,#605960_42%,#332f34_50%,#211e22_63%,#4a464b_75%,#666268_88%,#8a878c),linear-gradient(#86838a,#77747a_12%,#e0e0e2_30%,#4a484b_31%,#2a2a2b_60%,#3a373b)]">
      <div className="flex items-center justify-between h-[26px]">
        <h2 className="text-[12px] text-black [text-shadow:0_0_6px_#ddd,0_0_6px_#ddd]">背景颜色</h2>
        <button aria-label="关闭背景颜色" className="self-start w-[47px] h-[19px] flex items-center justify-center border border-t-0 border-[#dcc2bc] rounded-b bg-linear-to-b from-[#d8968a] via-[#b8412c] via-50% to-[#cf6a4a]"><CloseX /></button>
      </div>
      <div className="flex items-start border border-[#d0d0d0] bg-[#232323] h-[295px] pt-[19px] pl-[18px] pr-3 text-[11px] text-[#909090]">
        <div className="relative w-[256px] h-[256px] bg-[linear-gradient(to_top,#000,transparent),linear-gradient(to_right,#fff,#f00)]">
          <i className="absolute -left-[10px] -top-[11px] size-[18px] rounded-full border border-[#b0b0b0] outline outline-[#444] -outline-offset-2" />
          <i className="absolute left-[38px] top-[73px] size-[12px] rounded-full border border-[#3a2428]" />
        </div>
        <div className="relative ml-[14px] w-[18px] h-[256px] bg-[linear-gradient(#f00,#f0f_17%,#00f_34%,#0ff_51%,#0f0_67%,#ff0_84%,#f00)]">
          <Ico w={5} h={8} vb="0 0 5 8" className="absolute -left-[8px] -bottom-1 text-[#b0b0b0]"><path d="M1 0l3 4-3 4" /></Ico>
          <Ico w={5} h={8} vb="0 0 5 8" className="absolute -right-[7px] -bottom-1 text-[#b0b0b0]"><path d="M4 0L1 4l3 4" /></Ico>
        </div>
        <div className="ml-[16px] w-[61px] shrink-0">
          <div className="h-[34px] bg-[#b09292]" />
          <div className="h-[35px] bg-[#404040] mb-[7px]" />
          {channels.map((c, i) => (
            <div key={i} className={"flex items-center h-[23px] whitespace-nowrap " + c.gap}>
              <input id={"ch" + i} type="radio" name="channel" defaultChecked={c.on} className="appearance-none shrink-0 size-[13px] ml-[1px] mr-[4px] rounded-full border-2 border-[#8c8c8c] checked:bg-[#8c8c8c]" />
              <label htmlFor={"ch" + i}>{c.k}:</label>
              <button className="text-[#2d8ceb] text-[11px] ml-[1px] mr-[3px]">{c.v}</button>{c.u}
            </div>
          ))}
          <div className="flex items-center mt-[6px] -ml-[4px]">
            <label htmlFor="hex" className="mr-[2px]">#</label>
            <input id="hex" defaultValue="B09292" className="w-[59px] h-[20px] shrink-0 px-[5px] bg-[#171717] border border-[#303030] rounded-xs text-[#c0c0c0] text-[11px] outline-none" />
          </div>
        </div>
        <div className="ml-auto -mt-[6px] w-[90px] text-[13px] flex flex-col items-start">
          <button className="w-full h-[20px] rounded-full border-2 border-[#b4b4b4] text-[#e4e4e4] leading-[14px]">确定</button>
          <button className="w-full h-[20px] mt-[10px] rounded-full border-2 border-[#606060] text-[#8c8c8c] leading-[14px]">取消</button>
          <button aria-label="吸取颜色" className="w-[21px] h-[21px] mt-[47px] mb-[8px] flex items-center justify-center bg-[#1c1c1c] border border-[#161616] text-[#b0b0b0]"><Dropper /></button>
          <Tick id="bprev" checked tone="lit" label="预览" text="text-[#8c8c8c]" />
        </div>
      </div>
    </div>
  );
}

export default function App() {
  return (
    <div className="relative min-h-screen min-w-[1400px] flex flex-col overflow-hidden bg-[#232323] font-['Open_Sans','Noto_Sans_CJK_SC',sans-serif] cursor-default">
      <TitleBar />
      <MenuBar />
      <Toolbar />
      <main className="isolate grow flex flex-col gap-1 pt-1 px-[2px] bg-[#171717]">
        <div className="grow flex gap-1"><Project /><Viewer /><RightColumn /></div>
        <div className="flex gap-1"><Timeline /><Paragraph /></div>
      </main>
      <footer className="h-[31px] shrink-0 bg-[#232323]" />
      <CompSettings />
      <ColorDialog />
    </div>
  );
}
